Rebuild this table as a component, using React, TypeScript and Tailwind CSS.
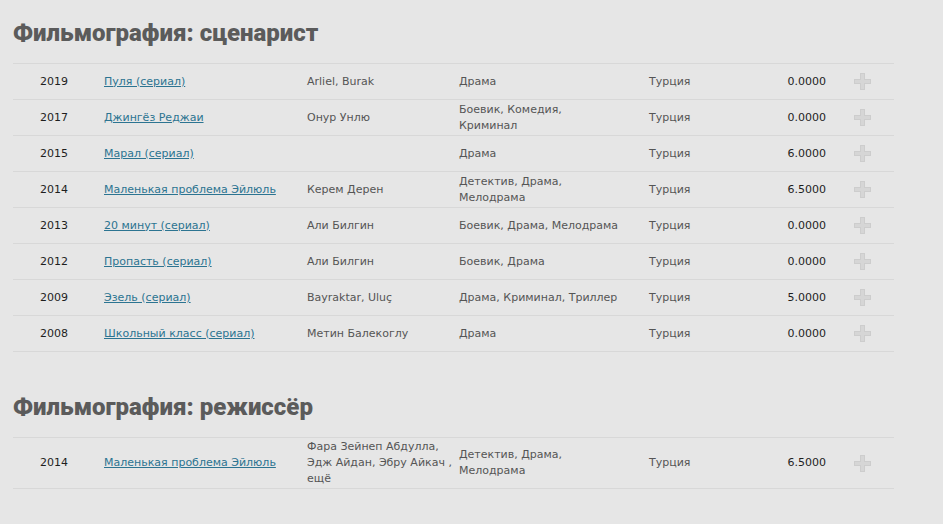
const writerRows = [
  { year: "2019", title: "Пуля (сериал)", people: ["Arliel, Burak"], genre: ["Драма"], country: "Турция", rating: "0.0000" },
  { year: "2017", title: "Джингёз Реджаи", people: ["Онур Унлю"], genre: ["Боевик, Комедия,", "Криминал"], country: "Турция", rating: "0.0000" },
  { year: "2015", title: "Марал (сериал)", people: [], genre: ["Драма"], country: "Турция", rating: "6.0000" },
  { year: "2014", title: "Маленькая проблема Эйлюль", people: ["Керем Дерен"], genre: ["Детектив, Драма,", "Мелодрама"], country: "Турция", rating: "6.5000" },
  { year: "2013", title: "20 минут (сериал)", people: ["Али Билгин"], genre: ["Боевик, Драма, Мелодрама"], country: "Турция", rating: "0.0000" },
  { year: "2012", title: "Пропасть (сериал)", people: ["Али Билгин"], genre: ["Боевик, Драма"], country: "Турция", rating: "0.0000" },
  { year: "2009", title: "Эзель (сериал)", people: ["Bayraktar, Uluç"], genre: ["Драма, Криминал, Триллер"], country: "Турция", rating: "5.0000" },
  { year: "2008", title: "Школьный класс (сериал)", people: ["Метин Балекоглу"], genre: ["Драма"], country: "Турция", rating: "0.0000" },
];

const directorRows = [
  {
    year: "2014",
    title: "Маленькая проблема Эйлюль",
    people: ["Фара Зейнеп Абдулла,", "Эдж Айдан, Эбру Айкач ,", "ещё"],
    genre: ["Детектив, Драма,", "Мелодрама"],
    country: "Турция",
    rating: "6.5000",
  },
];

type Row = (typeof writerRows)[number];

const PlusIcon = () => (
  <svg width="17" height="17" viewBox="0 0 17 17">
    <path d="M6 0h5v6h6v5h-6v6H6v-6H0V6h6z" fill="#cdcdcd" />
    <path d="M7 1h3v6h6v3h-6v6H7v-6H1V7h6z" fill="#d6d6d6" />
  </svg>
);

const FilmTable = ({ rows }: { rows: Row[] }) => (
  <div className="w-[881px] border-t border-[#d8d8d8]">
    {rows.map((r, i) => (
      <div
        key={i}
        className="grid grid-cols-[91px_203px_152px_190px_100px_77px_1fr] items-center min-h-[36px] py-[1px] border-b border-[#d8d8d8] text-[11px] leading-[16px]"
      >
        <div className="pl-[27px] text-[#1e1e1e]">{r.year}</div>
        <div>
          <a href="#" className="text-[#2c7491] underline">{r.title}</a>
        </div>
        <div className="text-[#555]">
          {r.people.map((p) => (
            <div key={p}>{p}</div>
          ))}
        </div>
        <div className="text-[#555]">
          {r.genre.map((g) => (
            <div key={g}>{g}</div>
          ))}
        </div>
        <div className="text-[#555]">{r.country}</div>
        <div className="text-right text-[#1e1e1e]">{r.rating}</div>
        <div className="pl-[28px] flex items-center">
          <PlusIcon />
        </div>
      </div>
    ))}
  </div>
);

export default function App() {
  return (
    <div className="min-h-[524px] w-full bg-[#e6e6e6] pl-[13px] pt-[19px] font-['DejaVu_Sans',sans-serif]">
      <h2 className="font-['Roboto',sans-serif] font-black text-[24px] leading-[28px] text-[#5b5b5b] mb-[16px]">
        Фильмография: сценарист
      </h2>
      <FilmTable rows={writerRows} />
      <h2 className="font-['Roboto',sans-serif] font-black text-[24px] leading-[28px] text-[#5b5b5b] mt-[41px] mb-[16px]">
        Фильмография: режиссёр
      </h2>
      <FilmTable rows={directorRows} />
    </div>
  );
}
